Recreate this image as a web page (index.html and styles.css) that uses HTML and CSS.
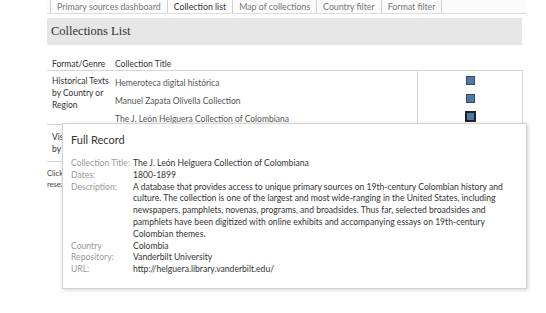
FILE: index.html
```html
<!DOCTYPE html>
<html lang="en">
<head>
  <meta charset="UTF-8">
  <title>Collections List</title>
  <link rel="stylesheet" href="styles.css">
</head>
<body>
  <div class="page">
    <nav class="tabs">
      <span class="tab">Primary sources dashboard</span>
      <span class="tab active">Collection list</span>
      <span class="tab">Map of collections</span>
      <span class="tab">Country filter</span>
      <span class="tab">Format filter</span>
    </nav>

    <header class="title-bar">
      <h1>Collections List</h1>
    </header>

    <section class="viz">
      <div class="col-headers">
        <div class="genre">Format/Genre</div>
        <div class="title-col">Collection Title</div>
      </div>

      <div class="group">
        <div class="genre">Historical Texts by Country or Region</div>
        <div class="titles">
          <div class="row">Hemeroteca digital histórica</div>
          <div class="row">Manuel Zapata Olivella Collection</div>
          <div class="row">The J. León Helguera Collection of Colombiana</div>
        </div>
        <div class="marks">
          <span class="mark"></span>
          <span class="mark"></span>
          <span class="mark selected"></span>
        </div>
      </div>

      <div class="group group-second">
        <div class="genre">Visual Materials by Country</div>
      </div>

      <p class="note">Click on a collection title to view its full record, with a description and a link to the<br>research website of the holding repository.</p>
    </section>

    <div class="tooltip">
      <div class="tooltip-title">Full Record</div>
      <dl class="record">
        <dt>Collection Title:</dt>
        <dd>The J. León Helguera Collection of Colombiana</dd>
        <dt>Dates:</dt>
        <dd>1800-1899</dd>
        <dt>Description:</dt>
        <dd>A database that provides access to unique primary sources on 19th-century Colombian history and<br>culture. The collection is one of the largest and most wide-ranging in the United States, including<br>newspapers, pamphlets, novenas, programs, and broadsides. Thus far, selected broadsides and<br>pamphlets have been digitized with online exhibits and accompanying essays on 19th-century<br>Colombian themes.</dd>
        <dt>Country</dt>
        <dd>Colombia</dd>
        <dt>Repository:</dt>
        <dd>Vanderbilt University</dd>
        <dt>URL:</dt>
        <dd>http://helguera.library.vanderbilt.edu/</dd>
      </dl>
    </div>
  </div>
</body>
</html>
```

FILE: styles.css
```css
body {
  margin: 0;
  background: #fff;
  font-family: 'Lato', sans-serif;
  color: #333;
}
.page {
  position: relative;
  width: 546px;
  height: 313px;
  overflow: hidden;
}
.tabs {
  display: flex;
  margin-left: 47px;
  width: 479px;
  height: 13px;
  border-bottom: 1px solid #dcdcdc;
  background: #fbfbfb;
}
.tab {
  padding: 0 6px;
  margin-left: 3px;
  border-left: 1px solid #d0d0d0;
  font-size: 8.8px;
  line-height: 14px;
  color: #777;
  white-space: nowrap;
}
.tab + .tab {
  margin-left: 0;
}
.tab:last-child {
  border-right: 1px solid #d0d0d0;
}
.tab.active {
  background: #fff;
  color: #333;
}
.title-bar {
  margin: 4px 0 0 47px;
  width: 475px;
  height: 27px;
  background: #e6e6e6;
  display: flex;
  align-items: center;
}
.title-bar h1 {
  margin: 0 0 0 4px;
  font-family: 'Liberation Serif', serif;
  font-weight: normal;
  font-size: 12.5px;
  color: #333;
}
.viz {
  margin-left: 47px;
  width: 476px;
  font-size: 8.5px;
}
.col-headers {
  display: flex;
  margin-top: 13px;
  height: 12px;
  line-height: 12px;
  color: #333;
}
.genre {
  width: 63px;
  padding-left: 5px;
  flex-shrink: 0;
}
.group {
  display: flex;
  height: 53px;
  border-top: 1px solid #d6d6d6;
  border-bottom: 1px solid #d6d6d6;
}
.group .genre {
  padding-top: 4px;
  line-height: 12px;
  color: #333;
}
.titles {
  width: 302px;
  padding-top: 6px;
  color: #555;
}
.row {
  height: 18px;
  line-height: 12px;
}
.marks {
  flex: 1;
  border-left: 1px solid #d6d6d6;
  border-right: 1px solid #d6d6d6;
  display: flex;
  flex-direction: column;
  align-items: center;
  padding-top: 5px;
  gap: 9px;
}
.mark {
  width: 7px;
  height: 7px;
  background: #4e79a7;
  border: 1px solid #3b4a5a;
}
.mark.selected {
  border: 2px solid #222;
  margin-top: -1px;
}
.group-second {
  height: 36px;
  border-top: none;
}
.group-second .genre {
  padding-top: 6px;
}
.note {
  margin: 6px 0 0;
  font-size: 7.5px;
  line-height: 11px;
  color: #444;
  white-space: nowrap;
}
.tooltip {
  position: absolute;
  left: 62px;
  top: 123px;
  width: 447px;
  padding: 8px 8px 12px;
  background: #fff;
  border: 1px solid #d2d2d2;
  box-shadow: 1px 1px 4px rgba(0, 0, 0, 0.18);
}
.tooltip-title {
  font-size: 11px;
  line-height: 16px;
  color: #333;
  margin-bottom: 10px;
}
.record {
  display: grid;
  grid-template-columns: 62px 1fr;
  margin: 0;
  font-size: 8.6px;
  line-height: 11.8px;
}
.record dt {
  color: #999;
  white-space: nowrap;
}
.record dd {
  margin: 0;
  color: #333;
  white-space: nowrap;
}
```
